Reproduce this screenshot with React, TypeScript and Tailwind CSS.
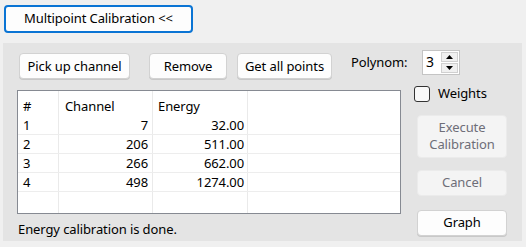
import React from "react";

const rows = [
  { n: "1", ch: "7", en: "32.00" },
  { n: "2", ch: "206", en: "511.00" },
  { n: "3", ch: "266", en: "662.00" },
  { n: "4", ch: "498", en: "1274.00" },
];

const Btn = ({ label, w, h = "h-[26px]", disabled }: { label: React.ReactNode; w: string; h?: string; disabled?: boolean }) => (
  <div
    className={`${w} ${h} shrink-0 flex items-center justify-center text-center leading-[17px] rounded-[4px] border ${
      disabled ? "bg-[#f4f4f4] border-[#ebebeb] text-[#6e6e78]" : "bg-[#fdfdfd] border-[#d2d2d2] text-black shadow-[0_1px_0_#c8c8c8]"
    }`}
  >
    {label}
  </div>
);

export default function App() {
  return (
    <div className="w-[526px] h-[247px] bg-[#f0f0f0] text-[13px] tracking-[-0.1px] overflow-hidden" style={{ fontFamily: '"Noto Sans", "Open Sans", sans-serif' }}>
      <div className="pt-[5px] pl-[4px]">
        <div className="w-[189px] h-[28px] flex items-center justify-center rounded-[4px] border-2 border-[#0a74d4] bg-[#fdfdfd] text-black">
          Multipoint Calibration &lt;&lt;
        </div>
      </div>

      <div className="mt-[10px] ml-[3px] w-[519px] h-[198px] bg-[#e4e4e4] flex">
        {/* left side */}
        <div className="pl-[14px] pt-[10px] w-[398px] shrink-0 flex flex-col">
          <div className="flex items-center pl-[2px]">
            <Btn label="Pick up channel" w="w-[111px]" />
            <div className="w-[19px] shrink-0" />
            <Btn label="Remove" w="w-[78px]" />
            <div className="w-[10px] shrink-0" />
            <Btn label="Get all points" w="w-[95px]" />
            <div className="ml-[19px] -mt-[6px] shrink-0 whitespace-nowrap text-black">Polynom:</div>
          </div>

          <div className="mt-[11px] w-[384px] h-[124px] bg-white border border-[#868a92] flex flex-col">
            <div className="flex h-[25px]">
              <div className="w-[41px] h-full border-r border-[#eaeaea] pl-[5px] pt-[6px]">#</div>
              <div className="w-[94px] h-full border-r border-[#eaeaea] pl-[6px] pt-[6px]">Channel</div>
              <div className="w-[95px] h-full border-r border-[#eaeaea] pl-[5px] pt-[6px]">Energy</div>
              <div className="flex-1" />
            </div>
            {rows.map((r) => (
              <div key={r.n} className="flex h-[19px] border-b border-[#ededed] leading-[19px]">
                <div className="w-[41px] border-r border-[#eaeaea] pl-[5px]">{r.n}</div>
                <div className="w-[94px] border-r border-[#eaeaea] pr-[4px] text-right">{r.ch}</div>
                <div className="w-[95px] border-r border-[#eaeaea] pr-[3px] text-right">{r.en}</div>
                <div className="flex-1" />
              </div>
            ))}
            <div className="flex flex-1">
              <div className="w-[41px] border-r border-[#eaeaea]" />
              <div className="w-[94px] border-r border-[#eaeaea]" />
              <div className="w-[95px] border-r border-[#eaeaea]" />
            </div>
          </div>

          <div className="mt-[6px] pl-[1px] text-black">Energy calibration is done.</div>
        </div>

        {/* right side */}
        <div className="pl-[13px] pt-[7px] flex flex-col">
          <div className="ml-[8px] w-[38px] h-[25px] bg-white border border-[#c4c4c4] flex">
            <div className="flex-1 pl-[3px] leading-[22px] text-[14px] text-black">3</div>
            <div className="w-[17px] my-[1px] mr-[1px] flex flex-col gap-[1px]">
              <div className="flex-1 bg-[#f0f0f0] border border-[#d0d0d0] flex items-center justify-center">
                <svg width="7" height="4" viewBox="0 0 7 4"><path d="M3.5 0L7 4H0z" fill="#000" /></svg>
              </div>
              <div className="flex-1 bg-[#f0f0f0] border border-[#d0d0d0] flex items-center justify-center">
                <svg width="7" height="4" viewBox="0 0 7 4"><path d="M0 0h7L3.5 4z" fill="#000" /></svg>
              </div>
            </div>
          </div>

          <div className="mt-[9px] flex items-center">
            <div className="w-[16px] h-[16px] rounded-[3px] border border-[#333] bg-[#f9f9f9]" />
            <span className="ml-[8px] text-black">Weights</span>
          </div>

          <div className="mt-[11px] ml-[3px] flex flex-col">
            <Btn label={<span>Execute<br />Calibration</span>} w="w-[90px]" h="h-[43px]" disabled />
            <div className="h-[12px]" />
            <Btn label="Cancel" w="w-[90px]" disabled />
            <div className="h-[14px]" />
            <Btn label="Graph" w="w-[90px]" />
          </div>
        </div>
      </div>
    </div>
  );
}
